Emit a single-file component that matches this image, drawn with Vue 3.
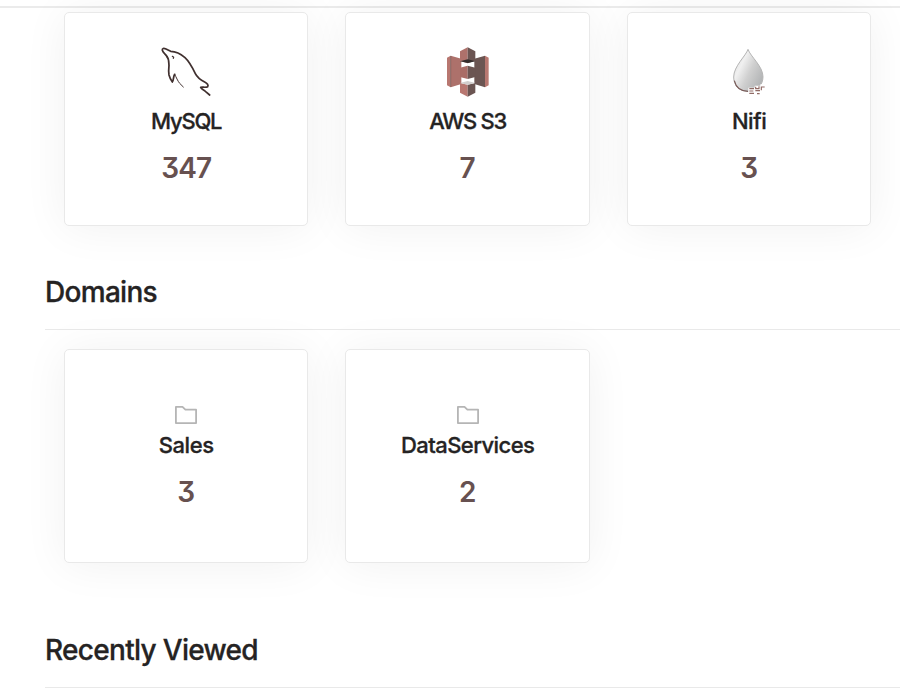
<script setup>
const services = [
  { name: 'MySQL', count: 347, icon: 'mysql' },
  { name: 'AWS S3', count: 7, icon: 's3' },
  { name: 'Nifi', count: 3, icon: 'nifi' },
]
const domains = [
  { name: 'Sales', count: 3, key: 'sales' },
  { name: 'DataServices', count: 2, key: 'data' },
]
</script>

<template>
  <div class="page">
    <div class="topbar"></div>
    <main class="content">
      <section class="cards">
        <article v-for="s in services" :key="s.name" class="card">
          <svg v-if="s.icon === 'mysql'" class="logo" viewBox="60 18 156 153" fill="none" stroke="#40302f" stroke-width="5.2" stroke-linejoin="round" stroke-linecap="round">
            <path d="M81 50C77 42 70 40 67 31C66 25 71 24 78 27L92 34C104 34 123 42 135 53C149 66 157 82 166 101C171 111 182 120 194 126C202 130 206 136 203 140C197 144 188 140 182 142C185 148 192 150 197 155L209 165" />
            <path d="M81 50C87 57 86 65 87 77C86 86 85 93 87 105C90 116 93 121 97 126C101 122 99 111 104 103" />
            <path d="M104 103C109 112 113 123 119 130L130 141" stroke-width="3" />
            <path d="M97 49L101 52L100 55" stroke-width="3.5" />
          </svg>
          <svg v-else-if="s.icon === 's3'" class="logo" viewBox="66 18 156 153">
            <path d="M81 53L92 47V142L81 136Z" fill="#b87770" />
            <path d="M92 47L124 56V132L92 142Z" fill="#ad716b" />
            <path d="M92 48V141" stroke="#6b5552" stroke-width="2" />
            <path d="M206 53L195 47V142L206 136Z" fill="#b87770" />
            <path d="M195 47L163 56V132L195 142Z" fill="#6b5552" />
            <path d="M120 34L143 22V70L120 62Z" fill="#ae716b" />
            <path d="M143 22L166 34V62L143 70Z" fill="#6b5552" />
            <path d="M120 64L143 58L166 64L143 69Z" fill="#342d2c" />
            <path d="M120 83L143 77V117L120 111Z" fill="#aa6d67" />
            <path d="M143 77L166 83V111L143 117Z" fill="#6b5552" />
            <path d="M120 129L143 134V170L120 158Z" fill="#b87770" />
            <path d="M143 134L166 129V158L143 170Z" fill="#6b5552" />
            <path d="M120 129L143 123L166 129L143 134Z" fill="#d1cecd" />
          </svg>
          <svg v-else class="logo" viewBox="54 18 156 153">
            <defs>
              <linearGradient id="drop" x1="0" y1="0" x2="1" y2="0.7">
                <stop offset="0" stop-color="#d2d2d2" />
                <stop offset="0.35" stop-color="#f0f0f0" />
                <stop offset="0.62" stop-color="#d0d0d0" />
                <stop offset="1" stop-color="#b2b4b5" />
              </linearGradient>
            </defs>
            <path d="M129 28C123 47 86 79 86 111C86 138 104 154 129 154C154 154 174 137 174 110C174 79 136 49 129 28Z" fill="url(#drop)" stroke="#b5b5b5" stroke-width="3" />
            <path d="M88 122C93 143 108 154 129 154" fill="none" stroke="#795b58" stroke-width="3.5" />
            <path d="M130 143H149V137H166V133H181V153H166V164H130Z" fill="#fff" />
            <path d="M133 146H147M133 153H145M133 160H147M152 140V146H162V139M151 152H165M156 161H164M169 151V141H179" fill="none" stroke="#906b66" stroke-width="3.5" />
          </svg>
          <h3 class="name" :class="s.icon">{{ s.name }}</h3>
          <p class="count" :class="{ wide: s.count > 99 }">{{ s.count }}</p>
        </article>
      </section>

      <h2 class="heading domains-heading">Domains</h2>
      <section class="cards domain-cards">
        <article v-for="d in domains" :key="d.key" class="card domain">
          <svg class="folder" viewBox="0 0 22 18" fill="none" stroke="#b5b5b5" stroke-width="1.8" stroke-linejoin="round">
            <path d="M.9 .9H7.5L10.4 3.7H21.1V17.1H.9Z" />
          </svg>
          <h3 class="name" :class="d.key">{{ d.name }}</h3>
          <p class="count">{{ d.count }}</p>
        </article>
      </section>

      <h2 class="heading recent-heading">Recently Viewed</h2>
    </main>
  </div>
</template>

<style>
body {
  margin: 0;
  background: #fff;
  overflow: hidden;
}
</style>

<style scoped>
.page {
  height: 691px;
  overflow: hidden;
  font-family: Inter, "Liberation Sans", sans-serif;
  color: #252323;
}
.topbar {
  height: 6px;
  background: #fff;
  border-bottom: 2px solid #ebebeb;
}
.content {
  padding: 4px 0 0 45px;
}
.cards {
  display: flex;
  gap: 37.05px;
  padding-left: 19px;
}
.card {
  box-sizing: border-box;
  flex: none;
  display: flex;
  flex-direction: column;
  align-items: center;
  width: 244.4px;
  height: 214px;
  padding-top: 33px;
  background: #fff;
  border: 1px solid #e9e9e9;
  border-radius: 5px;
  box-shadow: 0 2px 45px rgba(0, 0, 0, 0.06);
}
.logo {
  flex: none;
  width: 52px;
  height: 51px;
}
.name {
  margin: 9px 0 0;
  font-size: 22px;
  font-weight: 500;
  line-height: 30px;
  white-space: nowrap;
  letter-spacing: -0.45px;
  -webkit-text-stroke: 0.3px currentColor;
}
.mysql,
.s3 {
  letter-spacing: -1.25px;
}
.data {
  letter-spacing: -0.55px;
}
.count {
  margin: 12px 0 0;
  font-size: 28px;
  font-weight: 600;
  line-height: 40px;
  color: #675150;
  font-feature-settings: "cv09" 1;
}
.wide {
  letter-spacing: -0.9px;
}
.heading {
  box-sizing: border-box;
  margin: 0;
  font-size: 28px;
  font-weight: 500;
  line-height: 36px;
  white-space: nowrap;
  letter-spacing: -0.7px;
  border-bottom: 1px solid #e9e9e9;
  -webkit-text-stroke: 0.3px currentColor;
}
.domains-heading {
  height: 56px;
  margin-top: 48px;
}
.domain-cards {
  padding-top: 19px;
}
.domain {
  padding-top: 56px;
}
.folder {
  flex: none;
  width: 22px;
  height: 18px;
}
.domain .name {
  margin-top: 6px;
}
.recent-heading {
  height: 56px;
  margin-top: 69px;
}
</style>
